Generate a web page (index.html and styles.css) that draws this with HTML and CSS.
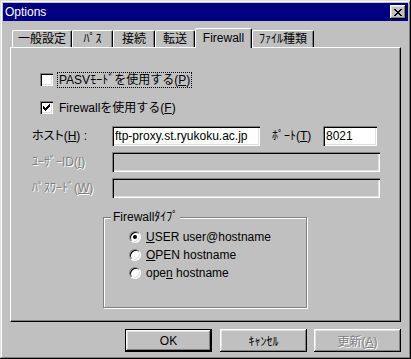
FILE: index.html
```html
<!DOCTYPE html>
<html lang="ja">
<head>
    <meta charset="UTF-8">
    <title>Options</title>
    <link rel="stylesheet" href="styles.css">
</head>
<body>

    <div class="window">
        <div class="titlebar">
            <span class="title">Options</span>
            <button class="close">
                <svg width="8" height="7" viewBox="0 0 8 7" shape-rendering="crispEdges">
                    <path d="M0 0h2v1h-2zM6 0h2v1h-2zM1 1h2v1h-2zM5 1h2v1h-2zM2 2h4v1h-4zM3 3h2v1h-2zM2 4h4v1h-4zM1 5h2v1h-2zM5 5h2v1h-2zM0 6h2v1h-2zM6 6h2v1h-2z" fill="#000"/>
                </svg>
            </button>
        </div>

        <div class="client">
            <!-- tab strip -->
            <div class="tabs">
                <div class="tab t1">一般設定</div>
                <div class="tab t2">ﾊﾟｽ</div>
                <div class="tab t3">接続</div>
                <div class="tab t4">転送</div>
                <div class="tab t5 active">Firewall</div>
                <div class="tab t6">ﾌｧｲﾙ種類</div>
            </div>

            <div class="panel">
                <div class="check-row first">
                    <span class="checkbox"></span>
                    <span class="check-label focus">PASVﾓｰﾄﾞを使用する(<u>P</u>)</span>
                </div>
                <div class="check-row">
                    <span class="checkbox">
                        <svg width="7" height="7" viewBox="0 0 7 7" shape-rendering="crispEdges">
                            <path d="M6 0h1v3h-1zM5 1h1v3h-1zM4 2h1v3h-1zM3 3h1v3h-1zM2 4h1v3h-1zM1 3h1v3h-1zM0 2h1v3h-1z" fill="#000"/>
                        </svg>
                    </span>
                    <span class="check-label">Firewallを使用する(<u>F</u>)</span>
                </div>

                <div class="field-row">
                    <span class="label">ホスト(<u>H</u>) :</span>
                    <div class="edit host">ftp-proxy.st.ryukoku.ac.jp</div>
                    <span class="port-label">ﾎﾟｰﾄ(<u>T</u>)</span>
                    <div class="edit port">8021</div>
                </div>
                <div class="field-row small-gap">
                    <span class="label disabled">ﾕｰｻﾞｰID(<u>I</u>)</span>
                    <div class="edit wide off"></div>
                </div>
                <div class="field-row small-gap">
                    <span class="label disabled">ﾊﾟｽﾜｰﾄﾞ(<u>W</u>)</span>
                    <div class="edit wide off"></div>
                </div>

                <div class="group">
                    <span class="legend">Firewallﾀｲﾌﾟ</span>
                    <div class="radio-row">
                        <span class="radio on"></span>
                        <span><u>U</u>SER user@hostname</span>
                    </div>
                    <div class="radio-row">
                        <span class="radio"></span>
                        <span><u>O</u>PEN hostname</span>
                    </div>
                    <div class="radio-row">
                        <span class="radio"></span>
                        <span>ope<u>n</u> hostname</span>
                    </div>
                </div>
            </div>

            <div class="buttons">
                <button class="btn default">OK</button>
                <button class="btn">ｷｬﾝｾﾙ</button>
                <button class="btn off-btn">更新(<u>A</u>)</button>
            </div>
        </div>
    </div>

</body>
</html>
```
FILE: styles.css
```css
*{
    margin: 0;
    padding: 0;
    box-sizing: border-box;
}

body{
    background-color: #c0c0c0;
}

.window{
    width: 411px;
    height: 359px;
    padding: 3px;
    background-color: #c0c0c0;
    font-family: "Liberation Sans", "Noto Sans CJK JP", sans-serif;
    font-size: 12px;
    line-height: 14px;
    color: #000;
    box-shadow: inset -1px -1px #000, inset 1px 1px #dfdfdf,
                inset -2px -2px #808080, inset 2px 2px #fff;
}

.titlebar{
    height: 18px;
    background-color: #000080;
    color: #fff;
    display: flex;
    align-items: center;
    justify-content: space-between;
    padding: 0 2px 0 2px;
}

.close{
    width: 16px;
    height: 14px;
    border: none;
    background-color: #c0c0c0;
    display: flex;
    align-items: center;
    justify-content: center;
    box-shadow: inset -1px -1px #000, inset 1px 1px #fff,
                inset -2px -2px #808080, inset 2px 2px #dfdfdf;
}

.client{
    padding: 7px 7px 0 7px;
}

/* tabs */
.tabs{
    display: flex;
    align-items: flex-end;
    height: 19px;
    padding-left: 2px;
}

.tab{
    height: 17px;
    text-align: center;
    line-height: 16px;
    border-top: 1px solid #fff;
    border-left: 1px solid #fff;
    border-right: 1px solid #000;
    border-radius: 2px 2px 0 0;
    box-shadow: inset -1px 0 #808080;
    background-color: #c0c0c0;
}

.t1{ width: 60px; }
.t2{ width: 41px; }
.t3{ width: 42px; }
.t4{ width: 40px; }
.t5{ width: 57px; }
.t6{ width: 62px; }

.tab.active{
    height: 20px;
    margin-bottom: -1px;
    position: relative;
    z-index: 1;
    line-height: 18px;
}

.panel{
    height: 275px;
    border-top: 1px solid #fff;
    border-left: 1px solid #fff;
    border-right: 1px solid #000;
    border-bottom: 1px solid #000;
    box-shadow: inset -1px -1px #808080;
}

/* checkboxes */
.check-row{
    display: flex;
    align-items: center;
    height: 15px;
    margin-left: 29px;
    margin-top: 13px;
}

.check-row.first{
    margin-top: 24px;
}

.checkbox{
    width: 13px;
    height: 13px;
    background-color: #fff;
    display: flex;
    align-items: center;
    justify-content: center;
    box-shadow: inset 1px 1px #808080, inset 2px 2px #000,
                inset -1px -1px #fff, inset -2px -2px #dfdfdf;
}

.check-label{
    margin-left: 4px;
    padding: 0 1px;
    border: 1px solid transparent;
    line-height: 14px;
}

.check-label.focus{
    border: 1px dotted #000;
}

/* text fields */
.field-row{
    display: flex;
    align-items: center;
    height: 20px;
    margin-top: 11px;
    margin-left: 21px;
}

.field-row.small-gap{
    margin-top: 6px;
}

.label{
    width: 80px;
    flex: none;
    font-feature-settings: "palt";
}

.disabled{
    color: #808080;
    text-shadow: 1px 1px #fff;
}

.edit{
    height: 20px;
    padding-left: 3px;
    line-height: 20px;
    background-color: #fff;
    box-shadow: inset 1px 1px #808080, inset 2px 2px #000,
                inset -1px -1px #fff, inset -2px -2px #dfdfdf;
}

.edit.host{ width: 148px; }
.edit.port{ width: 54px; }
.edit.wide{ width: 268px; }
.edit.off{ background-color: #c0c0c0; }

.port-label{
    width: 51px;
    margin-left: 12px;
}

/* firewall type group */
.group{
    position: relative;
    width: 204px;
    height: 91px;
    margin: 19px 0 0 92px;
    padding: 10px 0 0 25px;
    border: 1px solid #808080;
    box-shadow: inset 1px 1px #fff, 1px 1px #fff;
}

.legend{
    position: absolute;
    top: -8px;
    left: 7px;
    padding: 0 2px;
    background-color: #c0c0c0;
}

.radio-row{
    display: flex;
    align-items: center;
    height: 18px;
}

.radio{
    width: 12px;
    height: 12px;
    margin-right: 5px;
    border-radius: 50%;
    background-color: #fff;
    border: 1px solid;
    border-color: #808080 #fff #fff #808080;
    box-shadow: inset 1px 1px #000, inset -1px -1px #dfdfdf;
    display: flex;
    align-items: center;
    justify-content: center;
}

.radio.on::after{
    content: "";
    width: 4px;
    height: 4px;
    border-radius: 50%;
    background-color: #000;
}

/* buttons */
.buttons{
    display: flex;
    justify-content: flex-end;
    margin-top: 7px;
}

.btn{
    width: 87px;
    height: 23px;
    border: none;
    background-color: #c0c0c0;
    font-family: inherit;
    font-size: 12px;
    color: #000;
    box-shadow: inset -1px -1px #000, inset 1px 1px #fff,
                inset -2px -2px #808080, inset 2px 2px #dfdfdf;
}

.btn.default{
    margin-right: 8px;
    border: 1px solid #000;
}

.btn:nth-child(2){
    margin-right: 7px;
}

.btn.off-btn{
    color: #808080;
    text-shadow: 1px 1px #fff;
}
```
